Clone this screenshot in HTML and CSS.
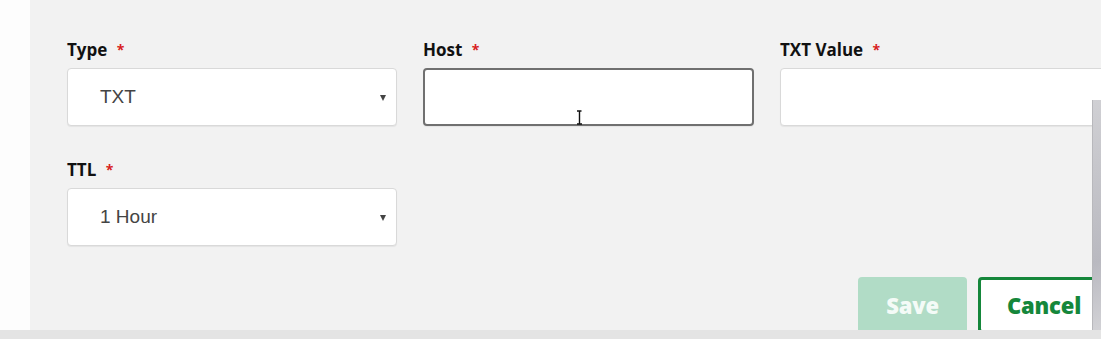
FILE: index.html
```html
<!DOCTYPE html>
<html>
<head>
<meta charset="utf-8">
<link rel="stylesheet" href="styles.css">
</head>
<body>
<div class="screen">
  <div class="sidebar"></div>
  <div class="panel">
    <div class="grid">
      <div class="field">
        <label class="label">Type <span class="req">*</span></label>
        <div class="select"><span class="value">TXT</span><span class="caret"></span></div>
      </div>
      <div class="field">
        <label class="label">Host <span class="req">*</span></label>
        <div class="input focused">
          <svg class="ibeam" width="7" height="15" viewBox="0 0 7 15"><path d="M1 1h2.5M3.5 1h2M3.5 1v13M1 14h5" stroke="#111" stroke-width="1.4" fill="none"/></svg>
        </div>
      </div>
      <div class="field">
        <label class="label">TXT Value <span class="req">*</span></label>
        <div class="input"></div>
      </div>
      <div class="field">
        <label class="label">TTL <span class="req">*</span></label>
        <div class="select"><span class="value">1 Hour</span><span class="caret"></span></div>
      </div>
    </div>
    <div class="actions">
      <button class="btn save">Save</button>
      <button class="btn cancel">Cancel</button>
    </div>
  </div>
  <div class="edge"></div>
</div>
<div class="bottombar"></div>
</body>
</html>
```
FILE: styles.css
```css
html, body {
  margin: 0;
  padding: 0;
  overflow: hidden;
  background: #ffffff;
  font-family: "Open Sans", "Liberation Sans", sans-serif;
}
.screen {
  position: relative;
  display: flex;
  height: 330px;
  overflow: hidden;
}
.sidebar {
  width: 30px;
  flex: none;
  background: #fdfdfd;
}
.panel {
  flex: 1;
  background: #f2f2f2;
  padding: 39px 0 0 37px;
  min-width: 0;
}
.grid {
  display: grid;
  grid-template-columns: 330px 331px 330px;
  column-gap: 26px;
  row-gap: 33px;
}
.label {
  display: block;
  font-weight: 700;
  font-size: 17px;
  line-height: 22px;
  color: #111;
  margin-bottom: 7px;
  letter-spacing: 0;
}
.req {
  color: #d81e1e;
  font-size: 14px;
  margin-left: 5px;
  vertical-align: top;
}
.select, .input {
  box-sizing: border-box;
  height: 58px;
  background: #fff;
  border: 1px solid #d9d9d9;
  border-radius: 4px;
  box-shadow: 0 1px 1px rgba(0,0,0,0.06);
  position: relative;
}
.select {
  display: flex;
  align-items: center;
  justify-content: space-between;
  padding: 0 10px 0 32px;
}
.value {
  font-family: "Liberation Sans", Arial, sans-serif;
  font-size: 19px;
  color: #444;
}
.caret {
  width: 0;
  height: 0;
  border-left: 3.5px solid transparent;
  border-right: 3.5px solid transparent;
  border-top: 6px solid #444;
  margin-top: 2px;
}
.input.focused {
  border: 2px solid #707070;
}
.ibeam {
  position: absolute;
  left: 151px;
  top: 40px;
}
.actions {
  display: flex;
  gap: 11px;
  margin: 31px 0 0 791px;
}
.btn {
  box-sizing: border-box;
  height: 56px;
  border-radius: 4px;
  font-family: "Open Sans", "Liberation Sans", sans-serif;
  font-weight: 800;
  font-size: 22px;
  letter-spacing: -0.2px;
  flex: none;
}
.save {
  width: 109px;
  background: #b1dcc6;
  border: none;
  color: #f4fbf7;
}
.cancel {
  width: 150px;
  background: #ffffff;
  border: 3px solid #15873b;
  color: #15873b;
  text-align: left;
  padding-left: 26px;
}
.edge {
  position: absolute;
  right: 0;
  top: 100px;
  width: 8px;
  height: 230px;
  background: linear-gradient(160deg, #d0d0d4 0%, #c6c6cb 30%, #b9b9c0 70%, #d2d2d6 100%);
  border-left: 1px solid #b8b8bc;
}
.bottombar {
  height: 9px;
  background: #e4e4e4;
}
```
